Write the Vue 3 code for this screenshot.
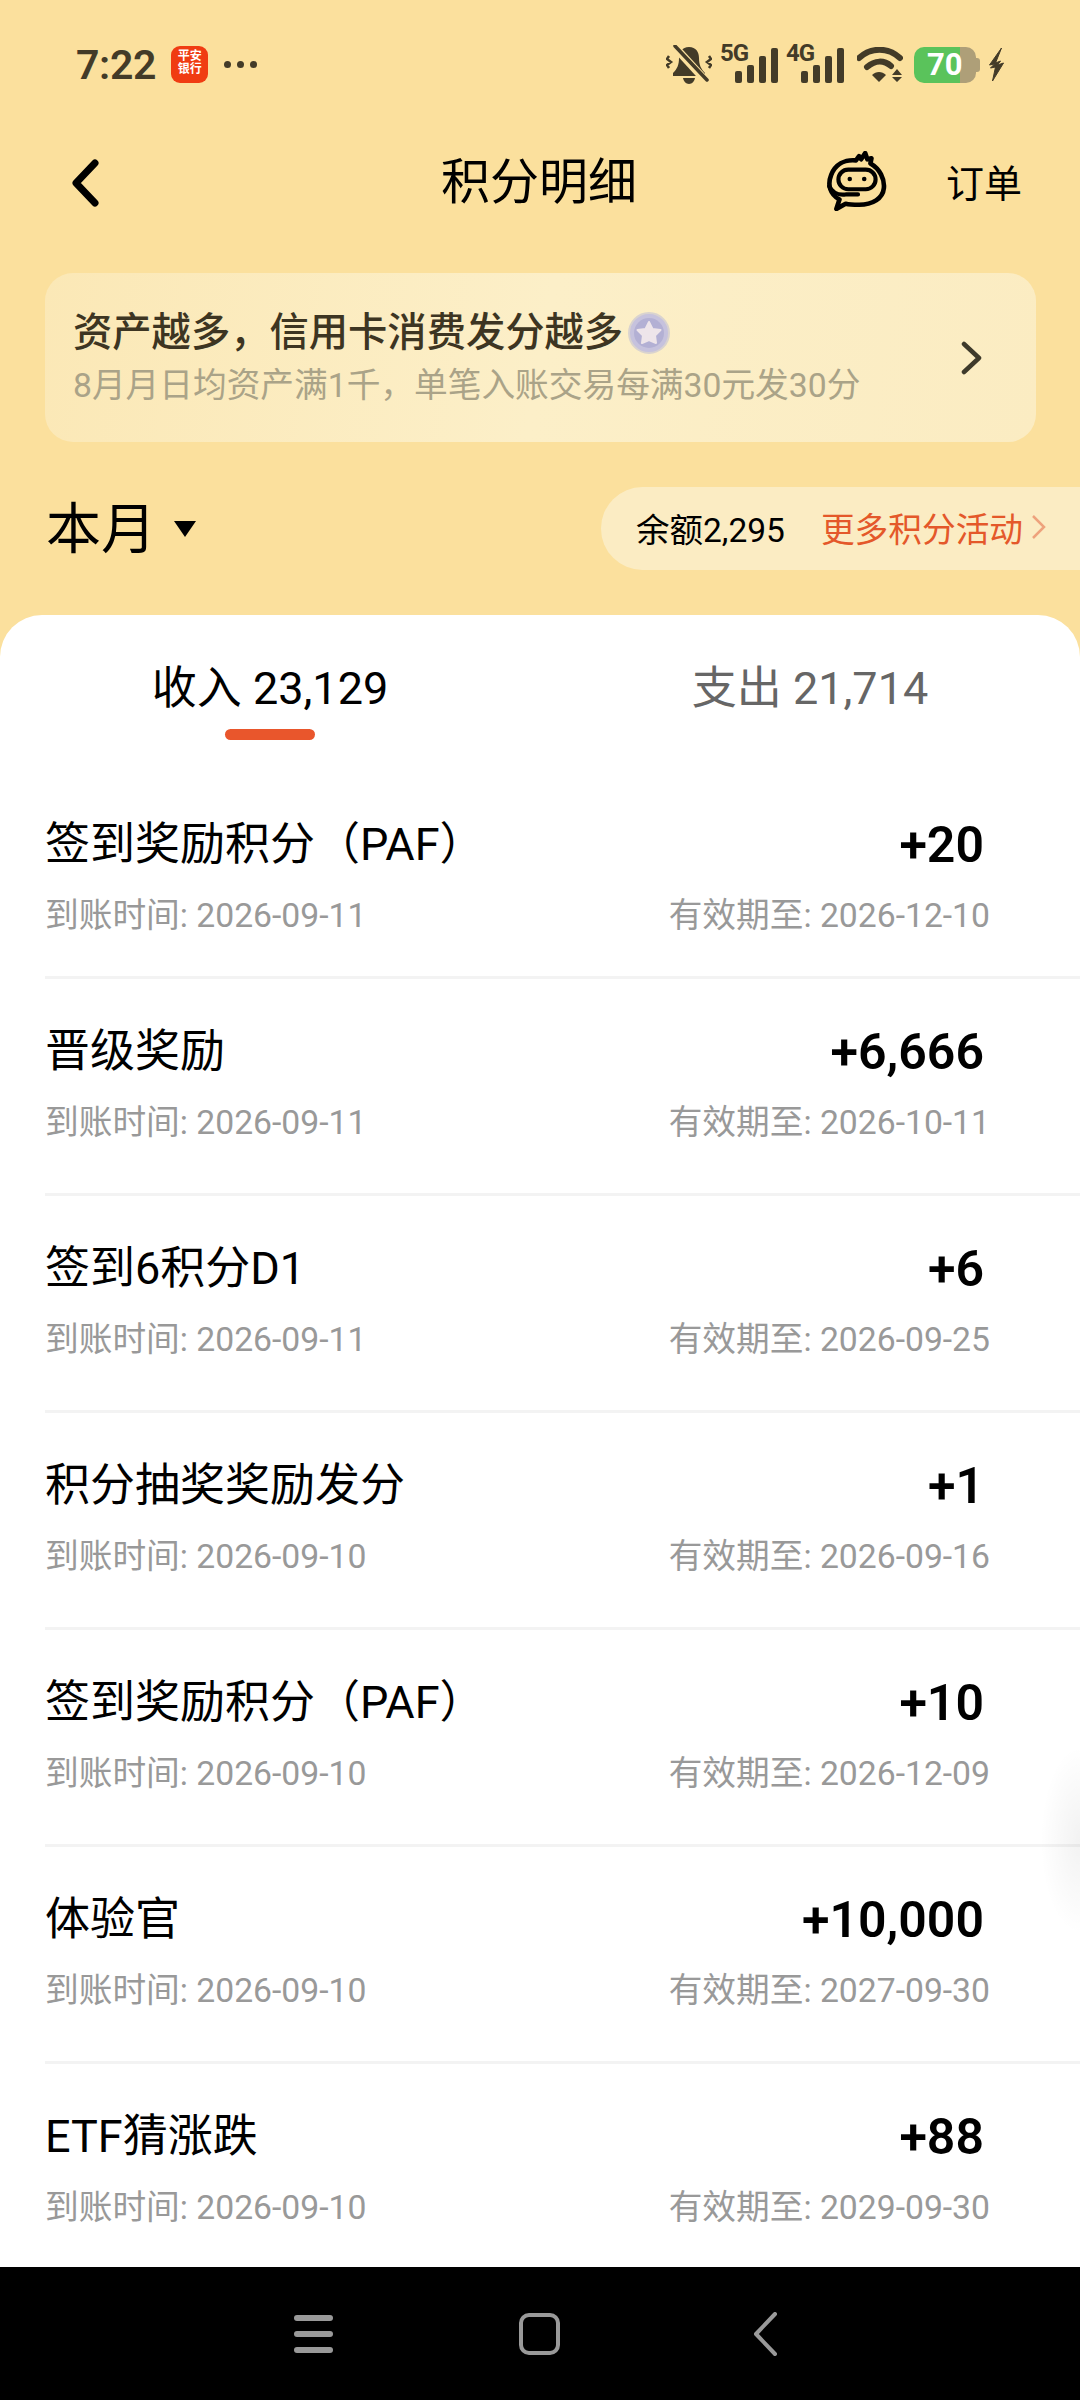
<script setup>
const rows = [
  { title: '签到奖励积分（PAF）', amount: '+20', date: '2026-09-11', expiry: '2026-12-10' },
  { title: '晋级奖励', amount: '+6,666', date: '2026-09-11', expiry: '2026-10-11' },
  { title: '签到6积分D1', amount: '+6', date: '2026-09-11', expiry: '2026-09-25' },
  { title: '积分抽奖奖励发分', amount: '+1', date: '2026-09-10', expiry: '2026-09-16' },
  { title: '签到奖励积分（PAF）', amount: '+10', date: '2026-09-10', expiry: '2026-12-09' },
  { title: '体验官', amount: '+10,000', date: '2026-09-10', expiry: '2027-09-30' },
  { title: 'ETF猜涨跌', amount: '+88', date: '2026-09-10', expiry: '2029-09-30' },
]
const networks = ['5G', '4G']
</script>

<template>
  <div class="page">
    <header class="status">
      <div class="status-left">
        <span class="time">7:22</span>
        <span class="app-icon"><span>平安</span><span>银行</span></span>
        <span class="dots"><i></i><i></i><i></i></span>
      </div>
      <div class="status-right">
        <svg class="bell" width="46" height="40" viewBox="0 0 46 40">
          <path d="M23 2c-7 0-10 5-10 11 0 7-2 11-6 15v3h32v-3c-4-4-6-8-6-15 0-6-3-11-10-11z" fill="#433b28" />
          <path d="M17 33h12c-.5 3-3 6-6 6s-5.500-3-6-6z" fill="#433b28" />
          <path d="M7 0l33 36" stroke="#fbe09d" stroke-width="8" />
          <path d="M9 1l32 34" stroke="#433b28" stroke-width="3.500" stroke-linecap="round" />
          <path d="M3 11l-2 3 4 3-4 3 2 3M43 11l2 3-4 3 4 3-2 3" fill="none" stroke="#433b28" stroke-width="2.500" />
        </svg>
        <div v-for="n in networks" :key="n" class="signal">
          <span class="net">{{ n }}</span>
          <div class="bars"><i class="b1"></i><i class="b2"></i><i class="b3"></i><i class="b4"></i></div>
        </div>
        <svg class="wifi" width="46" height="36" viewBox="0 0 46 36">
          <path d="M2 11C14 0 31 0 43 11" fill="none" stroke="#433b28" stroke-width="6" stroke-linecap="round" />
          <path d="M10 20c8-7 17-7 24-1" fill="none" stroke="#433b28" stroke-width="6" stroke-linecap="round" />
          <path d="M15 28c4-4 10-4 14 0l-7 7z" fill="#433b28" />
          <path d="M40 22l5 6H35zM40 35l5-5H35z" fill="#433b28" />
        </svg>
        <div class="battery"><span class="cell">70</span><span class="cap"></span></div>
        <svg class="bolt" width="17" height="33" viewBox="0 0 16 33">
          <path d="M13 0L1 17l5-1-4 4 5-1-3 14L15 15l-6 2 3-4-5 2z" fill="#433b28" stroke="#433b28" stroke-width="1" stroke-linejoin="round" />
        </svg>
      </div>
    </header>

    <nav class="bar">
      <svg class="back" width="30" height="48" viewBox="0 0 30 48">
        <path d="M25 4L6 24l19 20" fill="none" stroke="#000" stroke-width="7" stroke-linecap="round" stroke-linejoin="round" />
      </svg>
      <h1 class="title">积分明细</h1>
      <svg class="robot" width="64" height="60" viewBox="0 0 62 58">
        <path d="M14 47C5 42 2 33 6 23 10 13 19 8 30 9l3-4 2 3 4-6 2 6 4-1-1 5c9 5 14 15 13 24-1 10-11 16-24 16-5 0-9 0-13-1l-9 5z" fill="none" stroke="#000" stroke-width="4.500" stroke-linejoin="round" />
        <rect x="13" y="18" width="36" height="19" rx="9.500" fill="none" stroke="#000" stroke-width="4" />
        <circle cx="24" cy="27" r="2.200" /><circle cx="38" cy="27" r="2.200" />
        <path d="M4 34c3 6 9 9 16 8h12" fill="none" stroke="#000" stroke-width="4" stroke-linecap="round" />
      </svg>
      <span class="orders">订单</span>
    </nav>

    <section class="banner">
      <div class="banner-text">
        <div class="banner-title">资产越多，信用卡消费发分越多
          <svg class="medal" width="42" height="42" viewBox="0 0 42 42">
            <circle cx="21" cy="21" r="20" fill="#c6c2dd" stroke="#d9d3cf" stroke-width="2" />
            <circle cx="21" cy="21" r="15" fill="#b3b0d4" />
            <path d="M21 10l3.500 7 8 1-5.500 5.500 1 7.500-7-3-7 3 1-7.500-5.500-5.500 8-1z" fill="#eee5ea" stroke="#eee5ea" stroke-width="2" stroke-linejoin="round" />
          </svg>
        </div>
        <div class="banner-sub">8月月日均资产满1千，单笔入账交易每满30元发30分</div>
      </div>
      <svg class="banner-arrow" width="24" height="34" viewBox="0 0 24 34">
        <path d="M4 3l15 14L4 31" fill="none" stroke="#3e3a2b" stroke-width="4.500" stroke-linecap="round" stroke-linejoin="round" />
      </svg>
    </section>

    <section class="summary">
      <div class="month"><span>本月</span><i class="caret"></i></div>
      <div class="pill">
        <span class="balance">余额2,295</span>
        <span class="more">更多积分活动</span>
        <svg width="16" height="26" viewBox="0 0 16 26"><path d="M2 2l11 11L2 24" fill="none" stroke="#eea27c" stroke-width="2.500" /></svg>
      </div>
    </section>

    <main class="card">
      <div class="tabs">
        <div class="tab active">收入 23,129</div>
        <div class="tab">支出 21,714</div>
      </div>
      <div class="list">
        <article v-for="(r, i) in rows" :key="i" class="row">
          <div class="line">
            <span class="row-title">{{ r.title }}</span>
            <span class="amount">{{ r.amount }}</span>
          </div>
          <div class="line meta">
            <span>到账时间: {{ r.date }}</span>
            <span>有效期至: {{ r.expiry }}</span>
          </div>
        </article>
      </div>
      <div class="edge-shadow"></div>
    </main>

    <footer class="sysnav">
      <div class="menu"><i></i><i></i><i></i></div>
      <span class="home"></span>
      <svg width="26" height="44" viewBox="0 0 26 44"><path d="M23 2L4 22l19 20" fill="none" stroke="#999" stroke-width="4" stroke-linecap="round" stroke-linejoin="round" /></svg>
    </footer>
  </div>
</template>

<style scoped>
.page {
  width: 1080px;
  height: 2400px;
  display: flex;
  flex-direction: column;
  overflow: hidden;
  background: #fbe09d;
  color: #000;
  font-family: Roboto, "Noto Sans CJK SC", sans-serif;
}
.status {
  height: 124px;
  flex: none;
  box-sizing: border-box;
  display: flex;
  align-items: center;
  justify-content: space-between;
  padding: 5px 75px 0 76px;
  color: #433b28;
}
.status-left, .status-right { display: flex; align-items: center; }
.time { font-size: 41px; font-weight: 600; letter-spacing: -0.3px; }
.app-icon {
  width: 37px;
  height: 37px;
  margin-left: 15px;
  padding-top: 4px;
  box-sizing: border-box;
  border-radius: 9px;
  background: #f03c12;
  color: #fff;
  font-size: 12px;
  font-weight: 700;
  line-height: 12.500px;
  display: flex;
  flex-direction: column;
  align-items: center;
}
.dots { display: flex; gap: 6px; margin-left: 16px; }
.dots i { width: 7px; height: 7px; border-radius: 50%; background: #433b28; }
.status-right { height: 44px; }
.signal { position: relative; width: 58px; height: 36px; margin-left: 8px; }
.net { position: absolute; left: 0; top: -6px; font-size: 24px; font-weight: 700; line-height: 24px; letter-spacing: -1px; }
.bars { position: absolute; right: 0; bottom: 0; display: flex; align-items: flex-end; gap: 5px; }
.bars i { width: 7px; background: #433b28; border-radius: 2px; }
.b1 { height: 12px; } .b2 { height: 18px; } .b3 { height: 27px; } .b4 { height: 35px; }
.wifi { margin-left: 13px; }
.battery {
  position: relative;
  width: 62px;
  height: 36px;
  margin-left: 11px;
  margin-right: 4px;
  border-radius: 10px;
  background: linear-gradient(90deg, #5ac35b 0 74%, #ae9f78 74% 100%);
  color: #fff;
  font-size: 31px;
  font-weight: 700;
  line-height: 36px;
}
.cell { display: block; padding-left: 13px; }
.cap {
  position: absolute;
  right: -4px;
  top: 11px;
  width: 4px;
  height: 14px;
  border-radius: 0 3px 3px 0;
  background: #ae9f78;
}
.bolt { margin-left: 8px; }
.bar {
  height: 118px;
  flex: none;
  position: relative;
  display: flex;
  align-items: center;
  padding: 0 58px 0 70px;
}
.back { flex: none; }
.title {
  flex: 1;
  margin: 0;
  padding-left: 341px;
  font-size: 49px;
  line-height: 60px;
  font-weight: 400;
}
.robot { margin-right: 57px; margin-top: -4px; }
.orders { font-size: 38px; line-height: 50px; margin-top: 2px; }
.banner {
  margin: 31px 44px 0 45px;
  height: 169px;
  flex: none;
  box-sizing: border-box;
  padding: 0 52px 0 28px;
  display: flex;
  align-items: center;
  justify-content: space-between;
  border-radius: 28px;
  background: linear-gradient(100deg, #fbe8b6 0%, #fcefc8 50%, #fbecc2 100%);
}
.banner-title {
  display: flex;
  align-items: center;
  gap: 5px;
  color: #3d3522;
  font-size: 39.300px;
  font-weight: 500;
  line-height: 50px;
  white-space: nowrap;
}
.banner-sub {
  margin-top: 6px;
  color: #aaa388;
  font-size: 33.700px;
  line-height: 44px;
  white-space: nowrap;
}
.summary {
  margin-top: 45px;
  height: 83px;
  flex: none;
  display: flex;
  align-items: center;
  justify-content: space-between;
  padding-left: 46px;
}
.month { display: flex; align-items: center; gap: 18px; font-size: 55px; line-height: 70px; }
.caret {
  width: 0;
  height: 0;
  border-left: 11px solid transparent;
  border-right: 11px solid transparent;
  border-top: 16px solid #000;
}
.pill {
  width: 479px;
  height: 83px;
  box-sizing: border-box;
  padding: 0 0 3px 35px;
  display: flex;
  align-items: center;
  border-radius: 42px 0 0 42px;
  background: #fbecc3;
}
.balance { font-size: 33.500px; }
.more { margin-left: 36px; margin-right: 8px; color: #e4582a; font-size: 33.700px; }
.card {
  flex: 1;
  margin-top: 45px;
  min-height: 0;
  position: relative;
  overflow: hidden;
  background: #fff;
  border-radius: 42px 42px 0 0;
}
.tabs {
  height: 157px;
  display: grid;
  grid-template-columns: 540px 540px;
}
.tab {
  position: relative;
  height: 146px;
  padding-top: 46px;
  box-sizing: border-box;
  text-align: center;
  font-size: 45px;
  line-height: 56px;
  color: #666;
}
.tab.active { color: #000; }
.tab.active::after {
  content: "";
  position: absolute;
  left: 225px;
  top: 114px;
  width: 90px;
  height: 11px;
  border-radius: 6px;
  background: #e9562c;
}
.row {
  height: 217px;
  margin-left: 45px;
  padding: 44px 90px 0 0;
  box-sizing: border-box;
  border-bottom: 3px solid #f3f3f3;
}
.row:first-child { height: 207px; padding-top: 44px; }
.row:last-child { border-bottom: 0; }
.line {
  display: flex;
  align-items: center;
  justify-content: space-between;
}
.row-title { font-size: 45px; line-height: 58px; white-space: nowrap; }
.amount { margin-right: 6px; font-size: 50px; font-weight: 600; line-height: 58px; }
.meta {
  margin-top: 20px;
  color: #999;
  font-size: 33.700px;
  line-height: 44px;
  white-space: nowrap;
}
.edge-shadow {
  position: absolute;
  right: 0;
  top: 1130px;
  width: 40px;
  height: 190px;
  background: radial-gradient(ellipse at right center, rgba(0, 0, 0, 0.05), rgba(0, 0, 0, 0) 70%);
}
.sysnav {
  height: 133px;
  flex: none;
  background: #000;
  display: flex;
  align-items: center;
  padding-left: 294px;
}
.menu { width: 39px; display: flex; flex-direction: column; gap: 10px; }
.menu i { height: 6px; border-radius: 3px; background: #999; }
.home {
  width: 41px;
  height: 42px;
  margin-left: 186px;
  margin-right: 192px;
  box-sizing: border-box;
  border: 4px solid #999;
  border-radius: 10px;
}
</style>
